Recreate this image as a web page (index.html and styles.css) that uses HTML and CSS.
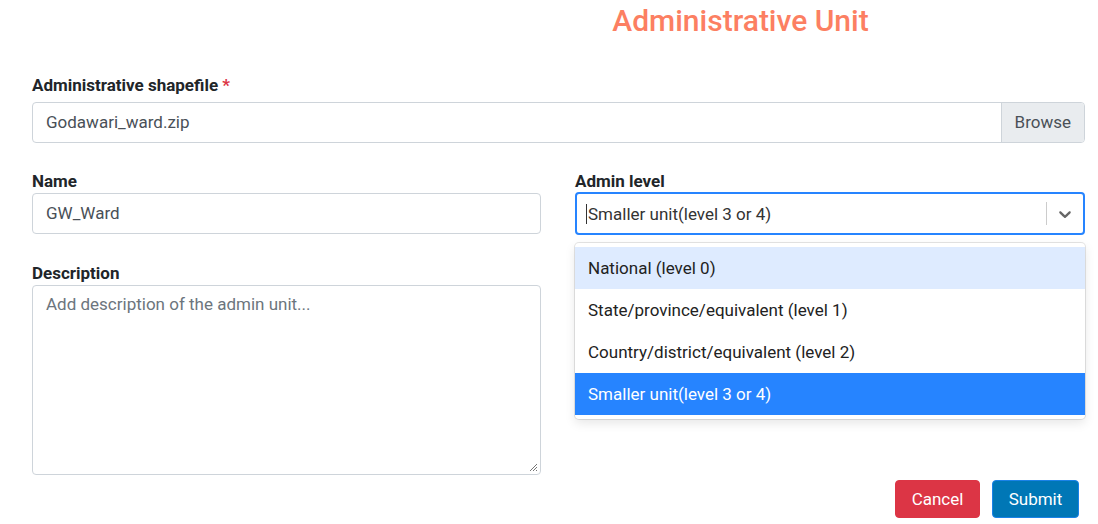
FILE: index.html
```html
<!DOCTYPE html>
<html>
<head>
<meta charset="utf-8">
<link rel="stylesheet" href="styles.css">
</head>
<body>
<div class="page">
  <h1 class="title">Administrative Unit</h1>
  <div class="field">
    <label class="label">Administrative shapefile <span class="req">*</span></label>
    <div class="file-input">
      <span class="file-name">Godawari_ward.zip</span>
      <span class="browse">Browse</span>
    </div>
  </div>
  <div class="grid">
    <div class="col">
      <div class="field">
        <label class="label">Name</label>
        <div class="input">GW_Ward</div>
      </div>
      <div class="field">
        <label class="label">Description</label>
        <div class="textarea">
          <span class="placeholder">Add description of the admin unit...</span>
          <svg class="grip" width="10" height="10" viewBox="0 0 10 10"><path d="M9 2L2 9M9 5L5 9M9 8L8 9" stroke="#777" stroke-width="1" fill="none"/></svg>
        </div>
      </div>
    </div>
    <div class="col">
      <div class="field select-field">
        <label class="label">Admin level</label>
        <div class="select">
          <div class="value"><span class="caret"></span>Smaller unit(level 3 or 4)</div>
          <span class="sep"></span>
          <svg class="chev" width="20" height="20" viewBox="0 0 20 20"><path fill="#666" d="M4.516 7.548c0.436-0.446 1.043-0.481 1.576 0l3.908 3.747 3.908-3.747c0.533-0.481 1.141-0.446 1.574 0 0.436 0.445 0.408 1.197 0 1.615-0.406 0.418-4.695 4.502-4.695 4.502-0.217 0.223-0.502 0.335-0.787 0.335s-0.57-0.112-0.789-0.335c0 0-4.287-4.084-4.695-4.502s-0.436-1.17 0-1.615z"/></svg>
        </div>
        <div class="menu">
          <div class="option hover">National (level 0)</div>
          <div class="option">State/province/equivalent (level 1)</div>
          <div class="option">Country/district/equivalent (level 2)</div>
          <div class="option selected">Smaller unit(level 3 or 4)</div>
        </div>
      </div>
    </div>
  </div>
  <div class="actions">
    <button class="btn cancel">Cancel</button>
    <button class="btn submit">Submit</button>
  </div>
</div>
</body>
</html>
```
FILE: styles.css
```css
* { box-sizing: border-box; }
body {
  margin: 0;
  font-family: Roboto, "Liberation Sans", sans-serif;
  color: #212529;
  background: #fff;
}
.page {
  padding: 0 13px 0 32px;
}
.title {
  margin: 0;
  padding: 4px 0 0 364px;
  height: 73px;
  font-size: 30px;
  font-weight: 500;
  line-height: 34px;
  color: #fc7f62;
  text-align: center;
}
.label {
  display: block;
  font-size: 17px;
  font-weight: 700;
  line-height: 24px;
  margin-bottom: 5px;
  color: #212529;
}
.req { color: #dc3545; }
.file-input {
  display: flex;
  height: 41px;
  border: 1px solid #ced4da;
  border-radius: 4px;
  overflow: hidden;
  font-size: 17px;
  color: #495057;
}
.file-name {
  flex: 1;
  padding: 0 13px;
  line-height: 39px;
}
.browse {
  background: #e9ecef;
  border-left: 1px solid #ced4da;
  padding: 0 13px;
  line-height: 39px;
}
.grid {
  display: grid;
  grid-template-columns: 509px 510px;
  column-gap: 34px;
  margin-top: 26px;
}
.col .field + .field { margin-top: 27px; }
.col .label { margin-bottom: 0; }
.input {
  height: 41px;
  border: 1px solid #ced4da;
  border-radius: 4px;
  padding: 0 13px;
  line-height: 39px;
  font-size: 17px;
  color: #495057;
}
.textarea {
  position: relative;
  height: 190px;
  border: 1px solid #ced4da;
  border-radius: 4px;
  padding: 6px 13px;
  font-size: 17px;
  line-height: 24px;
}
.placeholder { color: #6c757d; }
.grip { position: absolute; right: 2px; bottom: 2px; }
.select-field { position: relative; }
.select {
  display: flex;
  align-items: center;
  height: 43px;
  margin-top: -1px;
  border: 2px solid #2684ff;
  border-radius: 4px;
  padding: 0 8px 0 9px;
  font-size: 17px;
  color: #333;
}
.value { flex: 1; display: flex; align-items: center; }
.caret {
  display: inline-block;
  width: 1px;
  height: 20px;
  background: #333;
  margin-right: 1px;
}
.sep {
  width: 1px;
  height: 23px;
  background: #ccc;
  margin-right: 8px;
}
.chev { display: block; }
.menu {
  position: absolute;
  left: 0;
  right: 0;
  top: 74px;
  background: #fff;
  border-radius: 4px;
  box-shadow: 0 0 0 1px rgba(0,0,0,0.1), 0 4px 11px rgba(0,0,0,0.1);
  padding: 4px 0;
  z-index: 2;
}
.option {
  height: 42px;
  line-height: 42px;
  padding: 0 12px 0 13px;
  font-size: 17px;
  color: #222;
}
.option.hover { background: #deebff; }
.option.selected { background: #2684ff; color: #fff; }
.actions {
  display: flex;
  justify-content: flex-end;
  gap: 12px;
  margin-top: 5px;
  padding-right: 6px;
}
.btn {
  font-family: Roboto, "Liberation Sans", sans-serif;
  font-size: 17px;
  height: 38px;
  padding: 0 13px;
  border-radius: 4px;
  color: #fff;
  cursor: pointer;
}
.cancel { background: #dc3545; border: 1px solid #dc3545; width: 85px; }
.submit { background: #0077b6; border: 1px solid #1a82e8; width: 87px; }
```
